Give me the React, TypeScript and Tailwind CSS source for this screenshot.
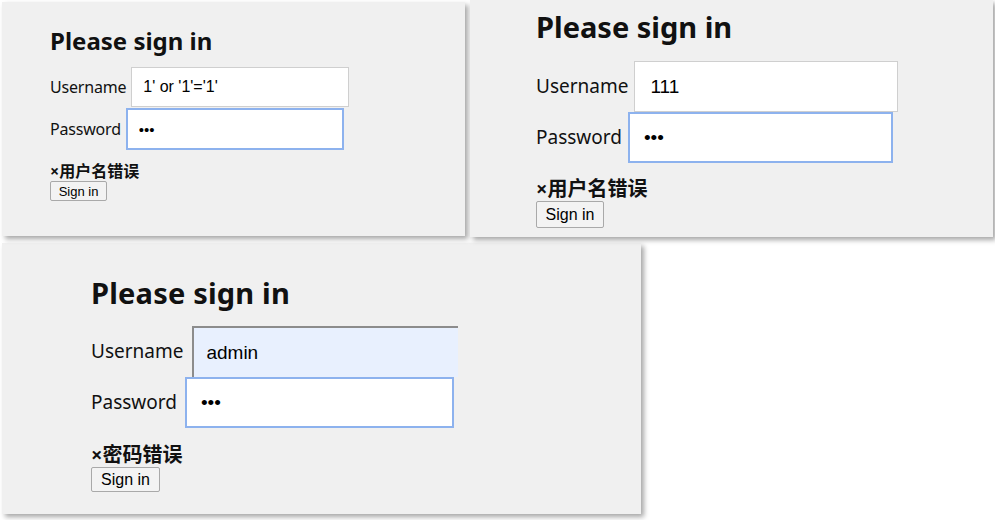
import React from 'react';

type PanelProps = {
  username: string;
  error: string;
  autofill?: boolean;
  s: {
    box: string;
    title: string;
    userRow: string;
    passRow: string;
    label: string;
    userInput: string;
    passInput: string;
    gapUser: string;
    gapPass: string;
    error: string;
    button: string;
  };
};

function LoginPanel({ username, error, autofill, s }: PanelProps) {
  return (
    <div className={`bg-[#f0f0f0] shadow-[3px_3px_5px_rgba(0,0,0,0.35)] flex flex-col items-start text-[#111] font-['Noto_Sans','Noto_Sans_CJK_SC',sans-serif] ${s.box}`}>
      <h2 className={`font-bold ${s.title}`}>Please sign in</h2>

      {/* Username */}
      <div className={`flex items-center ${s.userRow}`}>
        <label className={s.label}>Username</label>
        <input
          type="text"
          readOnly
          value={username}
          className={`${s.gapUser} ${s.userInput} outline-none font-['Liberation_Sans',Arial,sans-serif] text-black ${
            autofill
              ? 'bg-[#e8f0fe] border-t-2 border-l-2 border-[#8c8c8c]'
              : 'bg-white border border-[#cfcfcf]'
          }`}
        />
      </div>

      {/* Password */}
      <div className={`flex items-center ${s.passRow}`}>
        <label className={s.label}>Password</label>
        <input
          type="password"
          readOnly
          value="111"
          className={`${s.gapPass} ${s.passInput} outline-none bg-white border-2 border-[#8db2ee] font-['Liberation_Sans',Arial,sans-serif] text-black`}
        />
      </div>

      <div className={`font-bold ${s.error}`}>×{error}</div>
      <button className={`bg-[#f3f3f3] border border-[#a9a9a9] rounded-[2px] font-['Liberation_Sans',Arial,sans-serif] text-black leading-none ${s.button}`}>
        Sign in
      </button>
    </div>
  );
}

export default function App() {
  return (
    <div className="w-[995px] h-[520px] bg-white overflow-hidden">
      <div className="flex items-start">
        <LoginPanel
          username="1' or '1'='1'"
          error="用户名错误"
          s={{
            box: 'ml-[2px] mt-[2px] w-[463px] h-[234px] pl-[48px] pt-[25px]',
            title: 'text-[24px] leading-[28px]',
            userRow: 'mt-[12px]',
            passRow: 'mt-[1px]',
            label: 'text-[16px] tracking-[-0.2px]',
            gapUser: 'ml-[5px]',
            gapPass: 'ml-[5px]',
            userInput: 'w-[218px] h-[40px] pl-[11px] text-[16px]',
            passInput: 'w-[218px] h-[42px] pl-[11px] text-[15px]',
            error: 'mt-[11px] text-[16px] leading-[20px]',
            button: 'h-[20px] w-[57px] text-[13px]',
          }}
        />
        <LoginPanel
          username="111"
          error="用户名错误"
          s={{
            box: 'ml-[5px] w-[523px] h-[237px] pl-[66px] pt-[10px]',
            title: 'text-[29px] leading-[34px]',
            userRow: 'mt-[17px]',
            passRow: '',
            label: 'text-[19px]',
            gapUser: 'ml-[6px]',
            gapPass: 'ml-[6px]',
            userInput: 'w-[264px] h-[51px] pl-[15px] text-[19px]',
            passInput: 'w-[265px] h-[51px] pl-[14px] text-[19px]',
            error: 'mt-[14px] text-[20px] leading-[24px]',
            button: 'h-[27px] w-[68px] text-[16px]',
          }}
        />
      </div>
      <LoginPanel
        username="admin"
        error="密码错误"
        autofill
        s={{
          box: 'ml-[2px] mt-[6px] w-[639px] h-[271px] pl-[89px] pt-[33px]',
          title: 'text-[29px] leading-[34px] tracking-[0.2px]',
          userRow: 'mt-[16px]',
          passRow: '',
          label: 'text-[19px]',
          gapUser: 'ml-[9px]',
          gapPass: 'ml-[8px]',
          userInput: 'w-[266px] h-[51px] pl-[12px] text-[19px]',
          passInput: 'w-[269px] h-[51px] pl-[14px] text-[19px]',
          error: 'mt-[15px] text-[20px] leading-[24px]',
          button: 'h-[25px] w-[69px] text-[16px]',
        }}
      />
    </div>
  );
}
